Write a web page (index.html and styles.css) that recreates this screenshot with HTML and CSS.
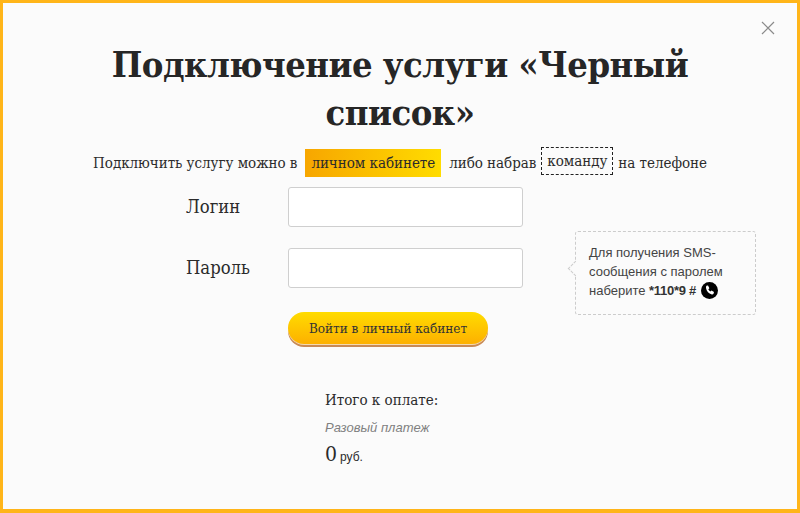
FILE: index.html
```html
<!DOCTYPE html>
<html lang="ru">
<head>
  <meta charset="UTF-8">
  <meta name="viewport" content="width=device-width, initial-scale=1.0">
  <title>Черный список</title>
  <link rel="stylesheet" href="styles.css">
</head>
<body>
<div class="modal">
  <button class="close" aria-label="Закрыть">
    <svg width="14" height="14" viewBox="0 0 14 14"><path d="M1 1l12 12M13 1L1 13" stroke="#8a8a8a" stroke-width="1.2" fill="none"/></svg>
  </button>

  <h1>Подключение услуги «Черный список»</h1>

  <p class="lead">
    <span>Подключить услугу можно в</span>
    <a class="cabinet-link">личном кабинете</a>
    <span>либо набрав</span>
    <a class="command-link">команду</a>
    <span>на телефоне</span>
  </p>

  <form class="login-form">
    <label for="login">Логин</label>
    <input type="text" id="login">
    <label for="password">Пароль</label>
    <input type="password" id="password">
    <button type="button" class="btn">Войти в личный кабинет</button>

    <div class="hint">
      <div>Для получения SMS-</div>
      <div>сообщения с паролем</div>
      <div>наберите <b>*110*9 #</b>
        <svg class="phone" width="17" height="17" viewBox="0 0 17 17">
          <circle cx="8.5" cy="8.5" r="8.5" fill="#000"/>
          <path d="M5.4 3.8l1.6-.4 1.4 2.8-1.1 1c.4 1 1.1 1.8 2.1 2.3l1.1-1 2.5 1.6-.5 1.6c-.3.6-1 .9-1.7.7-3-.7-5.3-3.2-5.8-6.4-.1-.9.1-1.7.4-2.2z" fill="#fff"/>
        </svg>
      </div>
    </div>
  </form>

  <div class="total">
    <div class="total-title">Итого к оплате:</div>
    <div class="total-type">Разовый платеж</div>
    <div class="total-sum">0<small>руб.</small></div>
  </div>
</div>
</body>
</html>
```

FILE: styles.css
```css
* {
  box-sizing: border-box;
  margin: 0;
  padding: 0;
}

body {
  width: 800px;
  height: 513px;
  overflow: hidden;
  font-family: "DejaVu Serif Condensed", "DejaVu Serif", serif;
  font-stretch: condensed;
  color: #2b2b2b;
}

.modal {
  position: relative;
  height: 513px;
  padding: 37px 90px 0;
  background-color: #fbfbfb;
  border: 3px solid #ffb519;
  border-bottom-width: 4px;
}

.close {
  position: absolute;
  top: 18px;
  right: 22px;
  width: 14px;
  height: 14px;
  border: none;
  background: none;
  line-height: 0;
}

h1 {
  font-size: 36px;
  line-height: 48px;
  font-weight: 700;
  text-align: center;
  letter-spacing: -0.5px;
  color: #262626;
}

.lead {
  display: flex;
  align-items: center;
  justify-content: center;
  height: 30px;
  margin-top: 12px;
  font-size: 15px;
  letter-spacing: -0.04px;
  white-space: nowrap;
}

.cabinet-link {
  margin: 0 8px 0 8px;
  padding: 0 6px;
  line-height: 28px;
  background: linear-gradient(to right, #f7a600, #ffdc00);
}

.command-link {
  margin: -4px 5px 0 5px;
  padding: 0 5px;
  line-height: 26px;
  border: 1px dashed #222;
}

.login-form {
  position: relative;
  display: grid;
  grid-template-columns: 102px 235px;
  grid-auto-rows: 40px;
  row-gap: 21px;
  align-items: center;
  margin: 9px 0 0 93px;
}

.login-form label {
  padding-bottom: 2px;
  font-size: 18.3px;
}

.login-form input {
  height: 40px;
  background-color: #fff;
  border: 1px solid #cfcfcf;
  border-radius: 3px;
}

.btn {
  grid-column: 2;
  width: 200px;
  height: 32px;
  margin-top: -2px;
  font-family: inherit;
  font-stretch: condensed;
  font-size: 13.4px;
  color: #333;
  background: linear-gradient(to bottom, #ffdc00, #fdb000);
  border: none;
  border-radius: 17px;
  box-shadow: 0 1px 0 #f3d9b0, 0 3px 0 #c98a55;
}

.hint {
  position: absolute;
  top: 44px;
  left: 389px;
  width: 181px;
  height: 84px;
  padding: 11px 13px 0;
  font-family: "Liberation Sans", sans-serif;
  font-stretch: normal;
  font-size: 13px;
  line-height: 19px;
  white-space: nowrap;
  color: #444;
  border: 1px dashed #ccc;
  border-radius: 3px;
}

.hint b {
  letter-spacing: -0.3px;
  color: #333;
}

.hint::before {
  content: "";
  position: absolute;
  top: 31px;
  left: -6px;
  width: 10px;
  height: 10px;
  background-color: #fbfbfb;
  border-left: 1px dashed #ccc;
  border-bottom: 1px dashed #ccc;
  transform: rotate(45deg);
}

.phone {
  margin-left: 2px;
  vertical-align: -4px;
}

.total {
  margin: 40px 0 0 232px;
}

.total-title {
  font-size: 15px;
  line-height: 22px;
}

.total-type {
  margin-top: 8px;
  font-family: "Liberation Sans", sans-serif;
  font-stretch: normal;
  font-style: italic;
  font-size: 13px;
  line-height: 18px;
  color: #808080;
}

.total-sum {
  margin-top: 3px;
  font-size: 21px;
  line-height: 28px;
}

.total-sum small {
  margin-left: 3px;
  font-family: "Liberation Sans", sans-serif;
  font-stretch: normal;
  font-size: 12px;
}
```
